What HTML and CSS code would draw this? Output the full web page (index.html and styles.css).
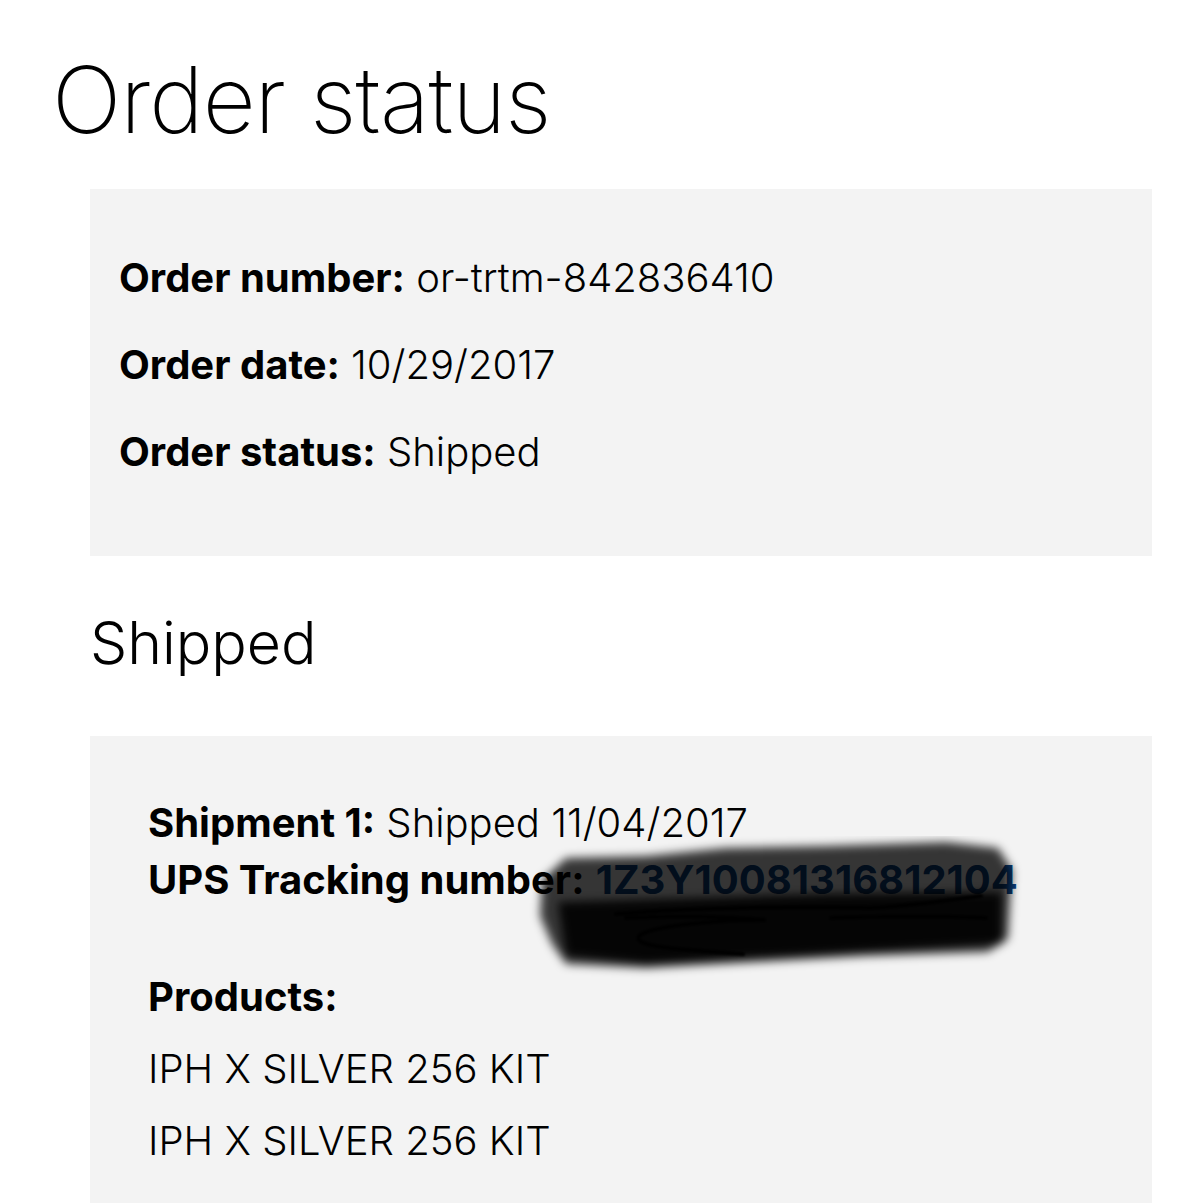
FILE: index.html
```html
<!DOCTYPE html>
<html lang="en">
<head>
<meta charset="utf-8">
<title>Order status</title>
<link rel="stylesheet" href="styles.css">
</head>
<body>
  <header class="header">
    <h1 class="title">Order status</h1>
  </header>
  <main class="main">
    <section class="panel panel-summary">
      <p class="row"><span class="label">Order number:</span> or-trtm-842836410</p>
      <p class="row"><span class="label">Order date:</span> 10/29/2017</p>
      <p class="row"><span class="label">Order status:</span> Shipped</p>
    </section>

    <h2 class="section-title">Shipped</h2>

    <section class="panel panel-shipment">
      <p class="shipment"><span class="label">Shipment 1:</span> Shipped 11/04/2017<br><span class="label">UPS Tracking number:</span> <a class="tracking">1Z3Y10081316812104</a></p>
      <svg class="redaction" width="520" height="160" viewBox="0 0 520 160" aria-hidden="true">
        <defs>
          <filter id="smudge" x="-10%" y="-30%" width="120%" height="160%">
            <feGaussianBlur stdDeviation="5"/>
          </filter>
          <filter id="soft" x="-10%" y="-30%" width="120%" height="160%">
            <feGaussianBlur stdDeviation="1.2"/>
          </filter>
        </defs>
        <g filter="url(#smudge)">
          <path d="M16 44 L40 22 L120 20 L200 12 L300 10 L420 6 L472 12 L486 34 L482 103 L462 116 L340 120 L230 126 L120 132 L40 128 L26 108 L14 80 Z" fill="#000" opacity="0.78"/>
          <path d="M32 66 L300 58 L476 56 L476 108 L300 118 L120 128 L40 120 Z" fill="#000" opacity="0.9"/>
        </g>
        <g filter="url(#soft)" fill="none" stroke="#000" stroke-linecap="round" stroke-width="4">
          <path d="M90 78 C165 72 265 70 345 72 C385 70 425 64 455 60"/>
          <path d="M100 82 C135 80 195 80 240 84 C185 84 125 90 113 100 C105 112 165 114 217 118"/>
          <path d="M305 82 C355 80 425 80 460 82"/>
        </g>
      </svg>
      <p class="products-title"><span class="label">Products:</span></p>
      <ul class="products">
        <li>IPH X SILVER 256 KIT</li>
        <li>IPH X SILVER 256 KIT</li>
      </ul>
    </section>
  </main>
</body>
</html>
```
FILE: styles.css
```css
html, body {
  margin: 0;
  padding: 0;
  background: #ffffff;
}

body {
  font-family: Inter, "Noto Sans", "Liberation Sans", sans-serif;
  color: #000000;
  overflow: hidden;
}

.header {
  padding: 45px 0 0 52px;
}

.title {
  margin: 0;
  font-size: 92px;
  line-height: 110px;
  font-weight: 200;
  letter-spacing: -1px;
}

.main {
  padding: 34px 51px 0 90px;
}

.panel {
  background: #f3f3f3;
}

.panel-summary {
  padding: 45px 29px 61px;
}

.row {
  margin: 0;
  font-size: 40px;
  line-height: 87px;
  font-weight: 300;
}

.label {
  font-weight: 700;
}

.section-title {
  margin: 51px 0 57px;
  font-size: 59px;
  line-height: 72px;
  font-weight: 300;
}

.panel-shipment {
  position: relative;
  padding: 58px 58px 60px;
}

.shipment {
  margin: 0;
  font-size: 40px;
  line-height: 57px;
  font-weight: 300;
}

.tracking {
  color: #0b3f7e;
  font-weight: 700;
  text-decoration: none;
}

.redaction {
  position: absolute;
  left: 436px;
  top: 100px;
  pointer-events: none;
}

.products-title {
  margin: 53px 0 0;
  font-size: 40px;
  line-height: 72px;
}

.products {
  list-style: none;
  margin: 0;
  padding: 0;
  font-size: 40px;
  line-height: 72px;
  font-weight: 300;
}
```
